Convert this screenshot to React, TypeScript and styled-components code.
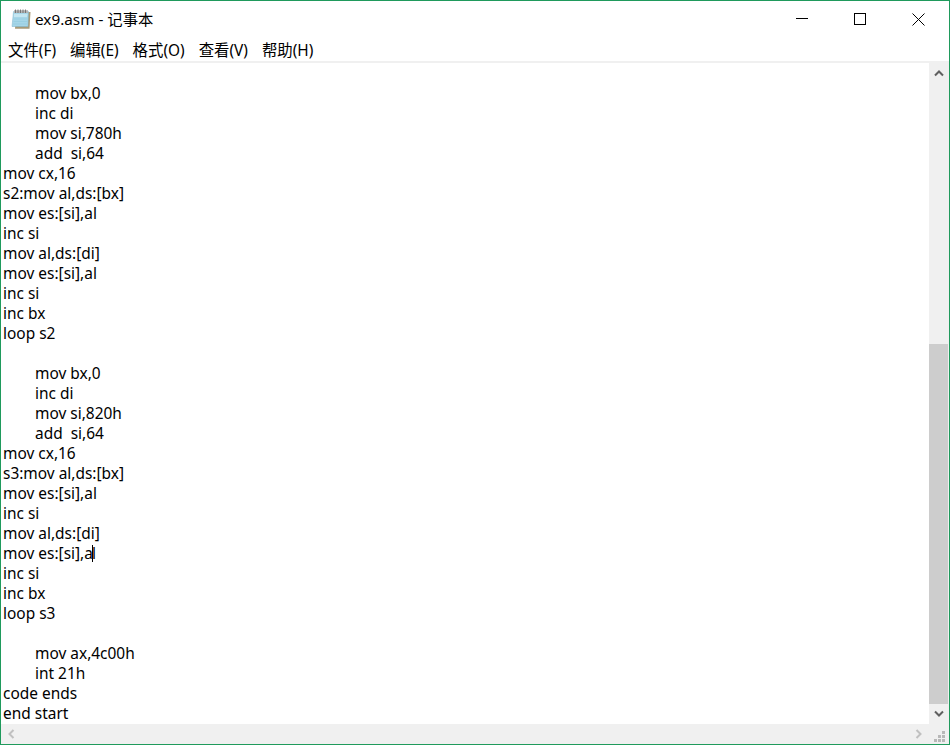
import styled, { createGlobalStyle } from "styled-components";

const GlobalStyle = createGlobalStyle`
  html, body {
    margin: 0;
    padding: 0;
    background: #fff;
  }
`;

const Window = styled.div`
  box-sizing: border-box;
  width: 950px;
  height: 745px;
  border: 1px solid #1f9a5c;
  display: flex;
  flex-direction: column;
  background: #fff;
  font-family: "Noto Sans", "Noto Sans CJK SC", sans-serif;
  color: #000;
  overflow: hidden;
`;

const TitleBar = styled.div`
  height: 36px;
  display: flex;
  align-items: center;
  padding-right: 1px;
  flex-shrink: 0;
`;

const AppIcon = styled.svg`
  width: 20px;
  height: 20px;
  margin-left: 10px;
  margin-right: 4px;
`;

const Title = styled.div`
  flex: 1;
  font-size: 15.3px;
  line-height: 20px;
`;

const WindowButton = styled.div`
  width: 58.5px;
  height: 36px;
  display: flex;
  align-items: center;
  justify-content: center;
`;

const MenuBar = styled.div`
  height: 26px;
  box-sizing: border-box;
  border-bottom: 2px solid #f0f0f0;
  display: flex;
  align-items: center;
  padding: 3px 0 0 7px;
  gap: 14px;
  flex-shrink: 0;
`;

const MenuItem = styled.div`
  font-size: 15.4px;
  line-height: 20px;
`;

const Middle = styled.div`
  flex: 1;
  display: flex;
  min-height: 0;
`;

const Editor = styled.pre`
  flex: 1;
  margin: 0;
  padding: 0 0 0 2px;
  font-family: inherit;
  font-size: 15.45px;
  line-height: 20px;
  tab-size: 32px;
  overflow: hidden;
`;

const Caret = styled.span`
  display: inline-block;
  width: 0;
  height: 17px;
  vertical-align: -3px;
  border-left: 1px solid #000;
  margin: 0 -1px 0 -1px;
`;

const VScroll = styled.div`
  width: 20px;
  display: flex;
  flex-direction: column;
  background: #f0f0f0;
`;

const VTrack = styled.div`
  flex: 1;
  display: flex;
  flex-direction: column;
  justify-content: flex-end;
`;

const VThumb = styled.div`
  height: 360px;
  width: 19px;
  background: #cdcdcd;
`;

const ArrowBox = styled.div`
  width: 20px;
  height: 20px;
  display: flex;
  align-items: center;
  justify-content: center;
  flex-shrink: 0;
`;

const BottomBar = styled.div`
  height: 20px;
  display: flex;
  background: #f0f0f0;
  flex-shrink: 0;
`;

const HTrack = styled.div`
  flex: 1;
`;

const Grip = styled.svg`
  width: 20px;
  height: 20px;
`;

function Chevron({ rotate, color }: { rotate: number; color: string }) {
  return (
    <svg width="10" height="8" viewBox="0 0 10 8" style={{ transform: `rotate(${rotate}deg)` }}>
      <path d="M1 6.5 L5 2.5 L9 6.5" fill="none" stroke={color} strokeWidth="2" />
    </svg>
  );
}

const menus = ["文件(F)", "编辑(E)", "格式(O)", "查看(V)", "帮助(H)"];

const before = `
	mov bx,0
	inc di
	mov si,780h
	add  si,64
mov cx,16
s2:mov al,ds:[bx]
mov es:[si],al
inc si
mov al,ds:[di]
mov es:[si],al
inc si
inc bx
loop s2

	mov bx,0
	inc di
	mov si,820h
	add  si,64
mov cx,16
s3:mov al,ds:[bx]
mov es:[si],al
inc si
mov al,ds:[di]
mov es:[si],a`;

const after = `l
inc si
inc bx
loop s3

	mov ax,4c00h
	int 21h
code ends
end start`;

export default function App() {
  return (
    <>
      <GlobalStyle />
      <Window>
        <TitleBar>
          <AppIcon viewBox="0 0 20 20">
            <path d="M5 3 H19.5 L18.5 19.8 H4 Z" fill="#a89a78" />
            <path d="M2.5 2.5 H17.5 L17 17.5 H1 Z" fill="#a6d6e8" stroke="#7db4cc" strokeWidth="0.5" />
            <path d="M3 5 H16.5 L16 8 H2.8 Z" fill="#c4e6f1" />
            <path d="M2.7 10 H16.2 M2.5 12.5 H16.1 M2.2 15 H16" stroke="#93cbe0" strokeWidth="0.7" />
            <path d="M3 1.2 H17 V4 H3 Z" fill="#b4b4b4" />
            <path d="M4.5 0.5 V4 M7 0.5 V4 M9.5 0.5 V4 M12 0.5 V4 M14.5 0.5 V4" stroke="#707070" strokeWidth="0.9" />
          </AppIcon>
          <Title>ex9.asm - 记事本</Title>
          <WindowButton>
            <svg width="12" height="12" viewBox="0 0 12 12">
              <path d="M0 5.5 H12" stroke="#000" strokeWidth="1" />
            </svg>
          </WindowButton>
          <WindowButton>
            <svg width="12" height="12" viewBox="0 0 12 12">
              <rect x="0.5" y="0.5" width="11" height="11" fill="none" stroke="#000" strokeWidth="1" />
            </svg>
          </WindowButton>
          <WindowButton>
            <svg width="13" height="13" viewBox="0 0 13 13">
              <path d="M0.5 0.5 L12.5 12.5 M12.5 0.5 L0.5 12.5" stroke="#000" strokeWidth="1" />
            </svg>
          </WindowButton>
        </TitleBar>
        <MenuBar>
          {menus.map((m) => (
            <MenuItem key={m}>{m}</MenuItem>
          ))}
        </MenuBar>
        <Middle>
          <Editor>
            {before}
            <Caret />
            {after}
          </Editor>
          <VScroll>
            <ArrowBox>
              <Chevron rotate={0} color="#606060" />
            </ArrowBox>
            <VTrack>
              <VThumb />
            </VTrack>
            <ArrowBox>
              <Chevron rotate={180} color="#606060" />
            </ArrowBox>
          </VScroll>
        </Middle>
        <BottomBar>
          <ArrowBox>
            <Chevron rotate={-90} color="#c0c0c0" />
          </ArrowBox>
          <HTrack />
          <ArrowBox>
            <Chevron rotate={90} color="#c0c0c0" />
          </ArrowBox>
          <Grip viewBox="0 0 20 20">
            <g fill="#b8b8b8">
              <rect x="13" y="7" width="3" height="3" />
              <rect x="9" y="11" width="3" height="3" />
              <rect x="13" y="11" width="3" height="3" />
              <rect x="5" y="15" width="3" height="3" />
              <rect x="9" y="15" width="3" height="3" />
              <rect x="13" y="15" width="3" height="3" />
            </g>
          </Grip>
        </BottomBar>
      </Window>
    </>
  );
}
